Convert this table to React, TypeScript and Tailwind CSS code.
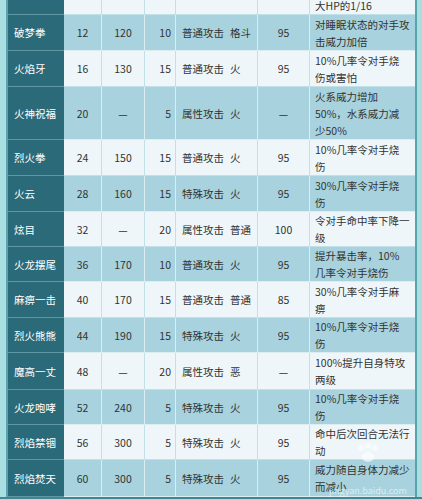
import React from 'react';

type Row = {
  name: string;
  lv: string;
  pow: string;
  pp: string;
  type: string[];
  acc: string;
  effect: string[];
  h: string;
  blue: boolean;
};

const rows: Row[] = [
  { name: '', lv: '', pow: '', pp: '', type: [], acc: '', effect: ['大HP的1/16'], h: 'h-[15px]', blue: false },
  { name: '破梦拳', lv: '12', pow: '120', pp: '10', type: ['普通攻击', '格斗'], acc: '95', effect: ['对睡眠状态的对手攻', '击威力加倍'], h: 'h-[36px]', blue: true },
  { name: '火焰牙', lv: '16', pow: '130', pp: '15', type: ['普通攻击', '火'], acc: '95', effect: ['10%几率令对手烧', '伤或害怕'], h: 'h-[36px]', blue: false },
  { name: '火神祝福', lv: '20', pow: '—', pp: '5', type: ['属性攻击', '火'], acc: '—', effect: ['火系威力增加', '50%，水系威力减', '少50%'], h: 'h-[53px]', blue: true },
  { name: '烈火拳', lv: '24', pow: '150', pp: '15', type: ['普通攻击', '火'], acc: '95', effect: ['10%几率令对手烧', '伤'], h: 'h-[36px]', blue: false },
  { name: '火云', lv: '28', pow: '160', pp: '15', type: ['特殊攻击', '火'], acc: '95', effect: ['30%几率令对手烧', '伤'], h: 'h-[36px]', blue: true },
  { name: '炫目', lv: '32', pow: '—', pp: '20', type: ['属性攻击', '普通'], acc: '100', effect: ['令对手命中率下降一', '级'], h: 'h-[35px]', blue: false },
  { name: '火龙摆尾', lv: '36', pow: '170', pp: '10', type: ['普通攻击', '火'], acc: '95', effect: ['提升暴击率，10%', '几率令对手烧伤'], h: 'h-[35px]', blue: true },
  { name: '麻痹一击', lv: '40', pow: '170', pp: '15', type: ['普通攻击', '普通'], acc: '85', effect: ['30%几率令对手麻', '痹'], h: 'h-[36px]', blue: false },
  { name: '烈火熊熊', lv: '44', pow: '190', pp: '15', type: ['特殊攻击', '火'], acc: '95', effect: ['10%几率令对手烧', '伤'], h: 'h-[35px]', blue: true },
  { name: '魔高一丈', lv: '48', pow: '—', pp: '20', type: ['属性攻击', '恶'], acc: '—', effect: ['100%提升自身特攻', '两级'], h: 'h-[37px]', blue: false },
  { name: '火龙咆哮', lv: '52', pow: '240', pp: '5', type: ['特殊攻击', '火'], acc: '95', effect: ['10%几率令对手烧', '伤'], h: 'h-[35px]', blue: true },
  { name: '烈焰禁锢', lv: '56', pow: '300', pp: '5', type: ['特殊攻击', '火'], acc: '95', effect: ['命中后次回合无法行', '动'], h: 'h-[35px]', blue: false },
  { name: '烈焰焚天', lv: '60', pow: '300', pp: '5', type: ['特殊攻击', '火'], acc: '95', effect: ['威力随自身体力减少', '而减小'], h: 'h-[37px]', blue: true },
];

const SkillRow: React.FC<{ row: Row; first: boolean }> = ({ row, first }) => {
  const cell = row.blue
    ? 'bg-[#a7d2de] border-r border-b border-[#dcedf2]'
    : 'bg-[#eef6f9] border-r border-b border-[#c3e0e8]';
  return (
    <div className={`grid grid-cols-[56px_38px_43px_31px_82px_52px_105px] ${row.h}`}>
      <div className="bg-[#2b6a79] border-b border-[#5f97a3] text-white flex items-center pl-[6px] whitespace-nowrap">
        {row.name}
      </div>
      <div className={`${cell} flex items-center justify-center`}>{row.lv}</div>
      <div className={`${cell} flex items-center justify-center`}>{row.pow}</div>
      <div className={`${cell} flex items-center justify-end pr-[4px]`}>{row.pp}</div>
      <div className={`${cell} flex items-center gap-[6px] pl-[6px] whitespace-nowrap`}>
        {row.type.map((t, i) => (
          <span key={i}>{t}</span>
        ))}
      </div>
      <div className={`${cell} flex items-center justify-center`}>{row.acc}</div>
      <div
        className={`${row.blue ? 'bg-[#a7d2de] border-b border-[#dcedf2]' : 'bg-[#eef6f9] border-b border-[#c3e0e8]'} flex flex-col ${first ? 'justify-end' : 'justify-center'} pl-[5px] leading-[17px] whitespace-nowrap overflow-hidden`}
      >
        {row.effect.map((line, i) => (
          <span key={i}>{line}</span>
        ))}
      </div>
    </div>
  );
};

export default function App() {
  return (
    <div
      className="relative w-[422px] h-[500px] overflow-hidden bg-[#a9dfe1] text-[10.5px] text-[#333] leading-[17px]"
      style={{ fontFamily: '"Noto Sans CJK SC", "Noto Sans", sans-serif' }}
    >
      <div className="ml-[6px] w-[411px] border-l-2 border-r-2 border-[#5aa3ae] flex flex-col">
        {rows.map((row, i) => (
          <SkillRow key={i} row={row} first={i === 0} />
        ))}
      </div>
      <div className="h-[2px] bg-[#3f8793]" />

      {/* watermark */}
      <div className="absolute left-[330px] top-[442px] w-[76px] flex flex-col items-center opacity-60 pointer-events-none">
        <svg width="30" height="22" viewBox="0 0 30 22">
          <circle cx="8" cy="6" r="3" fill="#ffffff" />
          <circle cx="15" cy="3.5" r="3" fill="#ffffff" />
          <circle cx="22" cy="6" r="3" fill="#ffffff" />
          <ellipse cx="15" cy="15" rx="6" ry="5" fill="#ffffff" />
        </svg>
        <span className="text-[9px] leading-[11px] text-white mt-[21px]">jingyan.baidu.com</span>
      </div>
    </div>
  );
}
